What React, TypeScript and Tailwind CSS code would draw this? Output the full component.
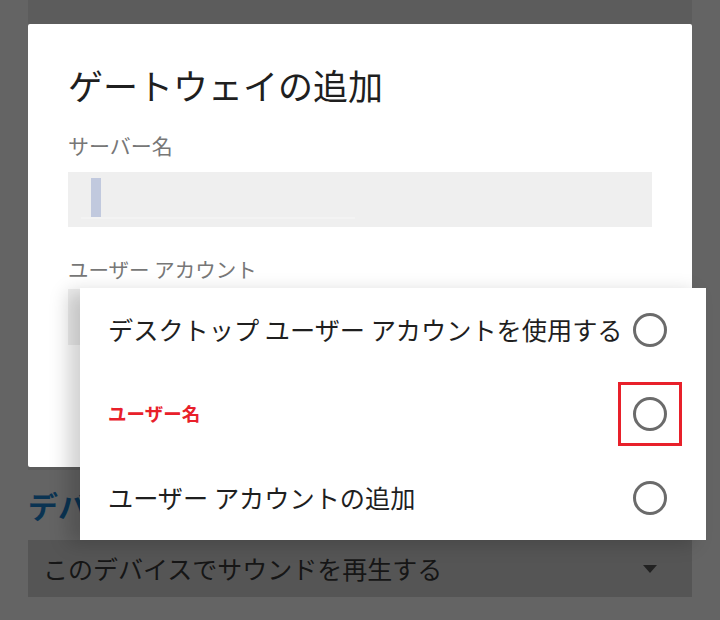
import { useState } from "react";

const jp = { fontFamily: '"Noto Sans CJK JP", "Noto Sans", sans-serif' };

interface Option {
  id: string;
  label: string;
  highlight?: boolean;
}

const options: Option[] = [
  { id: "desktop", label: "デスクトップ ユーザー アカウントを使用する" },
  { id: "username", label: "ユーザー名", highlight: true },
  { id: "add", label: "ユーザー アカウントの追加" },
];

function Radio({ checked }: { checked: boolean }) {
  return (
    <span className="flex h-[34px] w-[34px] items-center justify-center rounded-full border-[3px] border-[#6b6b6b]">
      {checked && <span className="h-[14px] w-[14px] rounded-full bg-[#6b6b6b]" />}
    </span>
  );
}

export default function App() {
  const [selected, setSelected] = useState<string | null>(null);

  return (
    <div className="relative h-[620px] w-[720px] overflow-hidden bg-[#646464]" style={jp}>
      {/* page behind the scrim */}
      <div className="mx-[28px] flex flex-col">
        <div className="h-[470px] bg-[#5c5c5c]" />
        <div className="flex h-[70px] items-center">
          <h2 className="whitespace-nowrap text-[30px] font-bold leading-none text-[#0a3352]">デバ</h2>
        </div>
        <div className="flex h-[57px] items-center justify-between bg-[#555555] pl-[15px] pr-[35px]">
          <span className="text-[25px] text-[#161616]">このデバイスでサウンドを再生する</span>
          <svg width="14" height="8" viewBox="0 0 14 8">
            <path d="M0 0 L14 0 L7 8 Z" fill="#222" />
          </svg>
        </div>
      </div>

      {/* dialog */}
      <div className="absolute left-[28px] top-[24px] flex h-[443px] w-[664px] flex-col rounded-[2px] bg-white pl-[40px] pr-[40px]">
        <h1 className="mt-[39px] text-[35px] font-normal leading-[44px] text-[#1f1f1f]">ゲートウェイの追加</h1>
        <label className="mt-[23px] text-[21px] leading-[30px] text-[#777777]">サーバー名</label>
        <div className="relative mt-[12px] h-[55px] bg-[#efefef]">
          <span className="absolute left-[23px] top-[6px] h-[40px] w-[10px] bg-[#c1c9de]" />
          <span className="absolute bottom-[8px] left-[13px] h-[2px] w-[274px] bg-[#f3f3f3]" />
        </div>
        <label className="mt-[27px] text-[20.5px] leading-[30px] text-[#777777]">ユーザー アカウント</label>
        <div className="mt-[5px] h-[56px] bg-[#efefef]" />
      </div>

      {/* dropdown menu */}
      <ul className="absolute left-[80px] top-[288px] flex h-[252px] w-[626px] flex-col bg-white shadow-[-12px_4px_18px_rgba(0,0,0,0.18)]">
        {options.map((opt) => (
          <li
            key={opt.id}
            onClick={() => setSelected(opt.id)}
            className="flex h-[84px] cursor-pointer items-center justify-between pl-[28px] pr-[39px]"
          >
            {opt.highlight ? (
              <span className="text-[18.5px] font-bold text-[#e8202a]">{opt.label}</span>
            ) : (
              <span className="text-[25.2px] text-[#1f1f1f]">{opt.label}</span>
            )}
            {opt.highlight ? (
              <span className="mr-[-15px] flex h-[64px] w-[64px] items-center justify-center border-[3px] border-[#e8202a]">
                <Radio checked={selected === opt.id} />
              </span>
            ) : (
              <Radio checked={selected === opt.id} />
            )}
          </li>
        ))}
      </ul>
    </div>
  );
}
